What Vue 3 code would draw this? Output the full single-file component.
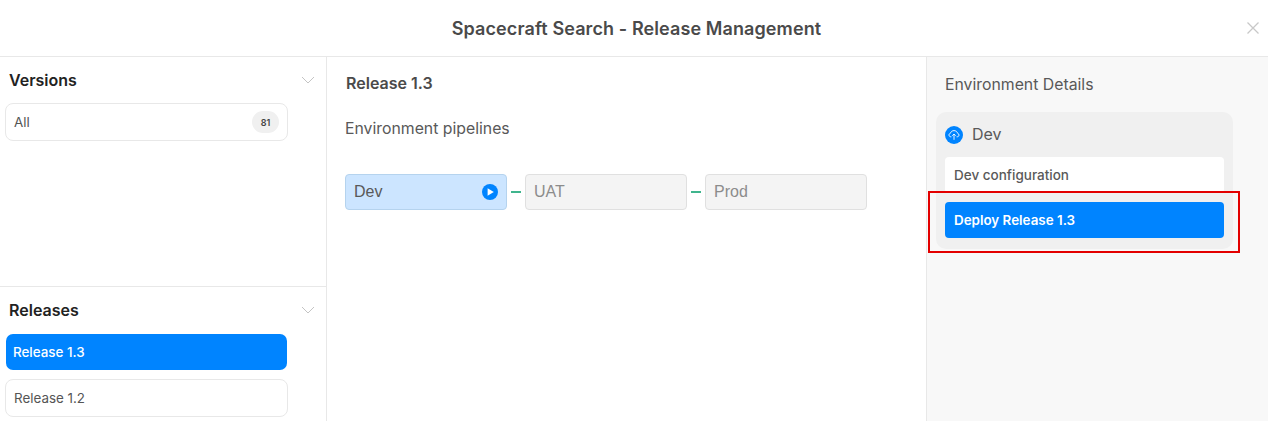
<template>
  <div class="modal">
    <header class="modal-header">
      <h1 class="modal-title">Spacecraft Search - Release Management</h1>
      <button class="close-btn" aria-label="Close">
        <svg width="12" height="12" viewBox="0 0 12 12">
          <path d="M0.5 0.5L11.5 11.5M11.5 0.5L0.5 11.5" stroke="#c8c8c8" stroke-width="1.3" fill="none" />
        </svg>
      </button>
    </header>

    <div class="modal-body">
      <aside class="sidebar">
        <section class="side-section versions">
          <div class="side-head">
            <h2 class="side-title">Versions</h2>
            <svg class="chevron" width="14" height="8" viewBox="0 0 14 8">
              <path d="M1 1L7 7L13 1" stroke="#c4c4c4" stroke-width="1" fill="none" />
            </svg>
          </div>
          <div class="list-item">
            <span>All</span>
            <span class="count">81</span>
          </div>
        </section>

        <section class="side-section releases">
          <div class="side-head">
            <h2 class="side-title">Releases</h2>
            <svg class="chevron" width="14" height="8" viewBox="0 0 14 8">
              <path d="M1 1L7 7L13 1" stroke="#c4c4c4" stroke-width="1" fill="none" />
            </svg>
          </div>
          <div class="release-list">
            <div
              v-for="release in releases"
              :key="release.name"
              class="list-item"
              :class="{ active: release.active }"
            >
              {{ release.name }}
            </div>
          </div>
        </section>
      </aside>

      <main class="center">
        <h2 class="release-title">Release 1.3</h2>
        <p class="pipeline-label">Environment pipelines</p>
        <div class="pipeline">
          <template v-for="(env, index) in environments" :key="env.name">
            <span v-if="index > 0" class="connector"></span>
            <div class="env-box" :class="{ current: env.current }">
              <span>{{ env.name }}</span>
              <svg v-if="env.current" width="16" height="16" viewBox="0 0 16 16">
                <circle cx="8" cy="8" r="8" fill="#0084ff" />
                <path d="M5.6 4.2L11.8 8L5.6 11.8Z" fill="#fff" />
              </svg>
            </div>
          </template>
        </div>
      </main>

      <aside class="details">
        <h2 class="details-title">Environment Details</h2>
        <div class="env-card">
          <div class="env-card-head">
            <svg class="env-icon" width="18" height="18" viewBox="0 0 18 18">
              <circle cx="9" cy="9" r="9" fill="#0084ff" />
              <path
                d="M6.4 10.8H5.8C4.7 10.8 4 10 4 9C4 8.1 4.6 7.4 5.5 7.2C5.8 5.7 7.2 4.6 9 4.6C10.8 4.6 12.2 5.7 12.5 7.2C13.4 7.4 14 8.1 14 9C14 10 13.3 10.8 12.2 10.8H11.6"
                stroke="#fff"
                stroke-width="0.9"
                fill="none"
              />
              <path d="M9 13.8V8M7.3 9.7L9 8L10.7 9.7" stroke="#fff" stroke-width="0.9" fill="none" />
            </svg>
            <span>Dev</span>
          </div>
          <div class="config-row">Dev configuration</div>
          <button class="deploy-btn">Deploy Release 1.3</button>
        </div>
      </aside>
    </div>

    <div class="highlight-box"></div>
  </div>
</template>

<script setup>
const releases = [
  { name: 'Release 1.3', active: true },
  { name: 'Release 1.2', active: false },
]

const environments = [
  { name: 'Dev', current: true },
  { name: 'UAT', current: false },
  { name: 'Prod', current: false },
]
</script>

<style>
html,
body {
  margin: 0;
  background: #fff;
  overflow: hidden;
}
</style>

<style scoped>
.modal {
  position: relative;
  width: 1268px;
  height: 421px;
  overflow: hidden;
  font-family: Inter, "Liberation Sans", sans-serif;
  color: #4a4a4a;
  background: #fff;
}

.modal-header {
  position: relative;
  display: flex;
  align-items: center;
  justify-content: center;
  box-sizing: border-box;
  height: 57px;
  border-bottom: 1px solid #e8e8e8;
}

.modal-title {
  margin: 0 0 0 5px;
  font-size: 18px;
  font-weight: 600;
  letter-spacing: 0.1px;
  color: #4a4a4a;
}

.close-btn {
  position: absolute;
  top: 22px;
  right: 9px;
  display: flex;
  padding: 0;
  border: 0;
  background: none;
}

.modal-body {
  display: flex;
  height: 364px;
}

.sidebar {
  display: flex;
  flex-direction: column;
  box-sizing: border-box;
  width: 327px;
  border-right: 1px solid #e8e8e8;
}

.side-section {
  padding: 0 38px 0 5px;
}

.versions {
  box-sizing: border-box;
  height: 230px;
  border-bottom: 1px solid #e8e8e8;
}

.side-head {
  position: relative;
  display: flex;
  align-items: center;
  height: 46px;
  padding-left: 4px;
}

.chevron {
  position: absolute;
  top: 19px;
  left: 296px;
}

.side-title {
  margin: 0;
  font-size: 16px;
  font-weight: 600;
  color: #222;
}

.list-item {
  display: flex;
  align-items: center;
  justify-content: space-between;
  box-sizing: border-box;
  width: 283px;
  height: 38px;
  padding: 0 8px;
  border: 1px solid #e8e8e8;
  border-radius: 8px;
  font-size: 13.4px;
  color: #555;
  background: #fff;
}

.count {
  display: flex;
  align-items: center;
  justify-content: center;
  width: 27px;
  height: 22px;
  border-radius: 11px;
  font-size: 9px;
  font-weight: 600;
  color: #444;
  background: #f0f0f0;
}

.release-list {
  display: flex;
  flex-direction: column;
  gap: 8px;
}

.list-item.active {
  padding-left: 7px;
  font-weight: 500;
  color: #fff;
  border-color: transparent;
  background: #0084ff;
  background-clip: padding-box;
}

.center {
  box-sizing: border-box;
  width: 599px;
  padding: 17px 18px 0;
}

.release-title {
  margin: 0 0 0 1px;
  font-size: 16px;
  line-height: 18px;
  font-weight: 600;
  color: #4a4a4a;
}

.pipeline-label {
  margin: 28px 0 0;
  font-size: 15.8px;
  line-height: 18px;
  color: #595959;
}

.pipeline {
  display: flex;
  align-items: center;
  margin-top: 36px;
}

.connector {
  width: 10px;
  height: 2px;
  margin: 0 4px 0 4px;
  background: #3fb58d;
}

.env-box {
  display: flex;
  align-items: center;
  justify-content: space-between;
  box-sizing: border-box;
  width: 162px;
  height: 36px;
  padding: 0 8px;
  border: 1px solid #e0e0e0;
  border-radius: 4px;
  font-family: "Liberation Sans", sans-serif;
  font-size: 16px;
  color: #8c8c8c;
  background: #f4f4f4;
}

.env-box.current {
  border-color: #b5d3ee;
  color: #595959;
  background: #cce5ff;
}

.details {
  flex: 1;
  padding: 18px 9px 0;
  border-left: 1px solid #e8e8e8;
  background: #f8f8f8;
}

.details-title {
  margin: 0 0 0 9px;
  font-size: 15.8px;
  line-height: 20px;
  font-weight: 400;
  color: #595959;
}

.env-card {
  box-sizing: border-box;
  width: 297px;
  height: 137px;
  margin-top: 17px;
  padding: 0 9px;
  border-radius: 10px;
  background: #f0f0f0;
}

.env-card-head {
  display: flex;
  align-items: center;
  gap: 9px;
  box-sizing: border-box;
  height: 45px;
  padding-bottom: 2px;
  font-size: 16px;
  color: #595959;
}

.env-icon {
  margin-top: 2px;
}

.config-row {
  display: flex;
  align-items: center;
  height: 36px;
  padding: 0 9px;
  border-radius: 4px;
  font-size: 13.5px;
  font-weight: 500;
  color: #595959;
  background: #fff;
}

.deploy-btn {
  display: flex;
  align-items: center;
  box-sizing: border-box;
  width: 100%;
  height: 36px;
  margin-top: 9px;
  padding: 0 9px;
  border: 0;
  border-radius: 4px;
  font-family: inherit;
  font-size: 13.4px;
  font-weight: 600;
  color: #fff;
  background: #0084ff;
}

.highlight-box {
  position: absolute;
  top: 191px;
  left: 928px;
  width: 308px;
  height: 58px;
  border: 2px solid #e30000;
}
</style>
